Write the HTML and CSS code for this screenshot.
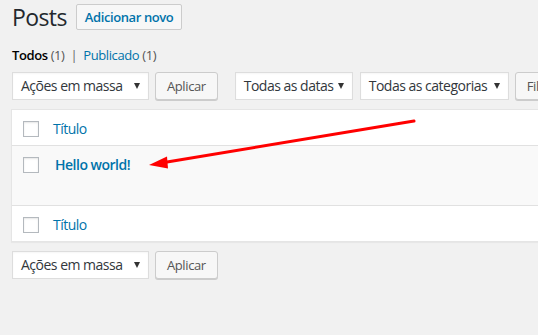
FILE: index.html
```html
<!DOCTYPE html>
<html>
<head>
<meta charset="UTF-8">
  <title>Posts</title>
  <link rel="stylesheet" href="styles.css">
</head>
<body>
  <div class="wrap">
    <div class="page-head">
      <h1>Posts</h1>
      <a class="page-title-action">Adicionar novo</a>
    </div>

    <ul class="subsubsub">
      <li class="current">Todos <span class="count">(1)</span></li>
      <li class="sep">|</li>
      <li><a>Publicado</a> <span class="count">(1)</span></li>
    </ul>

    <div class="tablenav">
      <div class="select bulk">Ações em massa<span class="caret"></span></div>
      <button class="button">Aplicar</button>
      <div class="select dates">Todas as datas<span class="caret"></span></div>
      <div class="select cats">Todas as categorias<span class="caret"></span></div>
      <button class="button">Filtrar</button>
    </div>

    <div class="list-table">
      <div class="row head">
        <span class="check"></span>
        <a class="col-title">Título</a>
      </div>
      <div class="row post">
        <span class="check"></span>
        <a class="row-title">Hello world!</a>
      </div>
      <div class="row foot">
        <span class="check"></span>
        <a class="col-title">Título</a>
      </div>
    </div>

    <div class="tablenav bottom">
      <div class="select bulk">Ações em massa<span class="caret"></span></div>
      <button class="button">Aplicar</button>
    </div>
  </div>

  <!-- annotation arrow drawn over the screenshot -->
  <svg class="arrow" width="538" height="335" viewBox="0 0 538 335">
    <line x1="414" y1="121" x2="164" y2="162.5" stroke="#ff0000" stroke-width="3" stroke-linecap="round"/>
    <polygon points="149,165 167,156.5 168,168.5" fill="#ff0000"/>
  </svg>
</body>
</html>
```

FILE: styles.css
```css
html, body {
  margin: 0;
  height: 100%;
}

body {
  position: relative;
  overflow: hidden;
  background: #f1f1f1;
  font-family: 'Open Sans', 'Noto Sans', sans-serif;
  font-size: 13px;
  letter-spacing: -0.4px;
  color: #444;
}

.wrap {
  width: 620px;
  padding-left: 12px;
}

a {
  color: #0073aa;
  text-decoration: none;
}

.page-head {
  display: flex;
  align-items: center;
  margin-top: 4px;
}

h1 {
  margin: 0;
  font-size: 23px;
  font-weight: 400;
  line-height: 26px;
  letter-spacing: -0.6px;
  color: #23282d;
}

.page-title-action {
  margin-left: 9px;
  height: 24px;
  line-height: 24px;
  padding: 0 8px;
  border: 1px solid #ccc;
  border-radius: 2px;
  background: #f7f7f7;
  font-size: 13px;
  font-weight: 600;
}

.subsubsub {
  list-style: none;
  margin: 15px 0 0;
  padding: 0;
  display: flex;
  gap: 6px;
  line-height: 20px;
  color: #666;
}

.subsubsub .current {
  color: #000;
  font-weight: 600;
}

.subsubsub .count {
  color: #555;
  font-weight: 400;
}

.subsubsub .sep {
  color: #666;
}

.tablenav {
  display: flex;
  gap: 6px;
  margin-top: 7px;
  height: 29px;
}

.tablenav.bottom {
  margin-top: 9px;
}

.select {
  position: relative;
  box-sizing: border-box;
  height: 28px;
  line-height: 26px;
  padding: 0 8px;
  border: 1px solid #ddd;
  background: #fff;
  box-shadow: inset 0 1px 2px rgba(0, 0, 0, 0.04);
  font-size: 14px;
  letter-spacing: -0.5px;
  color: #32373c;
}

.select .caret {
  position: absolute;
  right: 8px;
  top: 10px;
  border-left: 3px solid transparent;
  border-right: 3px solid transparent;
  border-top: 6px solid #333;
}

.bulk {
  width: 137px;
}

.dates {
  width: 118px;
  margin-left: 11px;
}

.cats {
  width: 149px;
  margin-left: 1px;
}

.button {
  box-sizing: border-box;
  height: 28px;
  padding: 0 11px;
  border: 1px solid #ccc;
  border-radius: 3px;
  background: #f7f7f7;
  box-shadow: 0 1px 0 #ccc;
  font-family: inherit;
  font-size: 13px;
  letter-spacing: -0.4px;
  color: #555;
}

.list-table {
  margin-top: 8px;
  margin-left: -1px;
  background: #fff;
  border: 1px solid #e5e5e5;
  box-shadow: 0 1px 1px rgba(0, 0, 0, 0.04);
}

.row {
  display: flex;
  align-items: flex-start;
  box-sizing: border-box;
  padding: 11px 0 0 11px;
  border-bottom: 1px solid #e1e1e1;
}

.row.head {
  height: 36px;
}

.row.post {
  height: 60px;
  background: #f9f9f9;
}

.row.foot {
  height: 35px;
  border-bottom: none;
}

.check {
  box-sizing: border-box;
  width: 16px;
  height: 16px;
  border: 1px solid #b4b9be;
  background: #fff;
  box-shadow: inset 0 1px 2px rgba(0, 0, 0, 0.1);
}

.col-title {
  margin-left: 14px;
  font-size: 14px;
  line-height: 16px;
  letter-spacing: -0.5px;
}

.row-title {
  margin-left: 16px;
  font-size: 14px;
  font-weight: 600;
  line-height: 16px;
  letter-spacing: -0.5px;
}

.arrow {
  position: absolute;
  left: 0;
  top: 0;
  pointer-events: none;
}
```
